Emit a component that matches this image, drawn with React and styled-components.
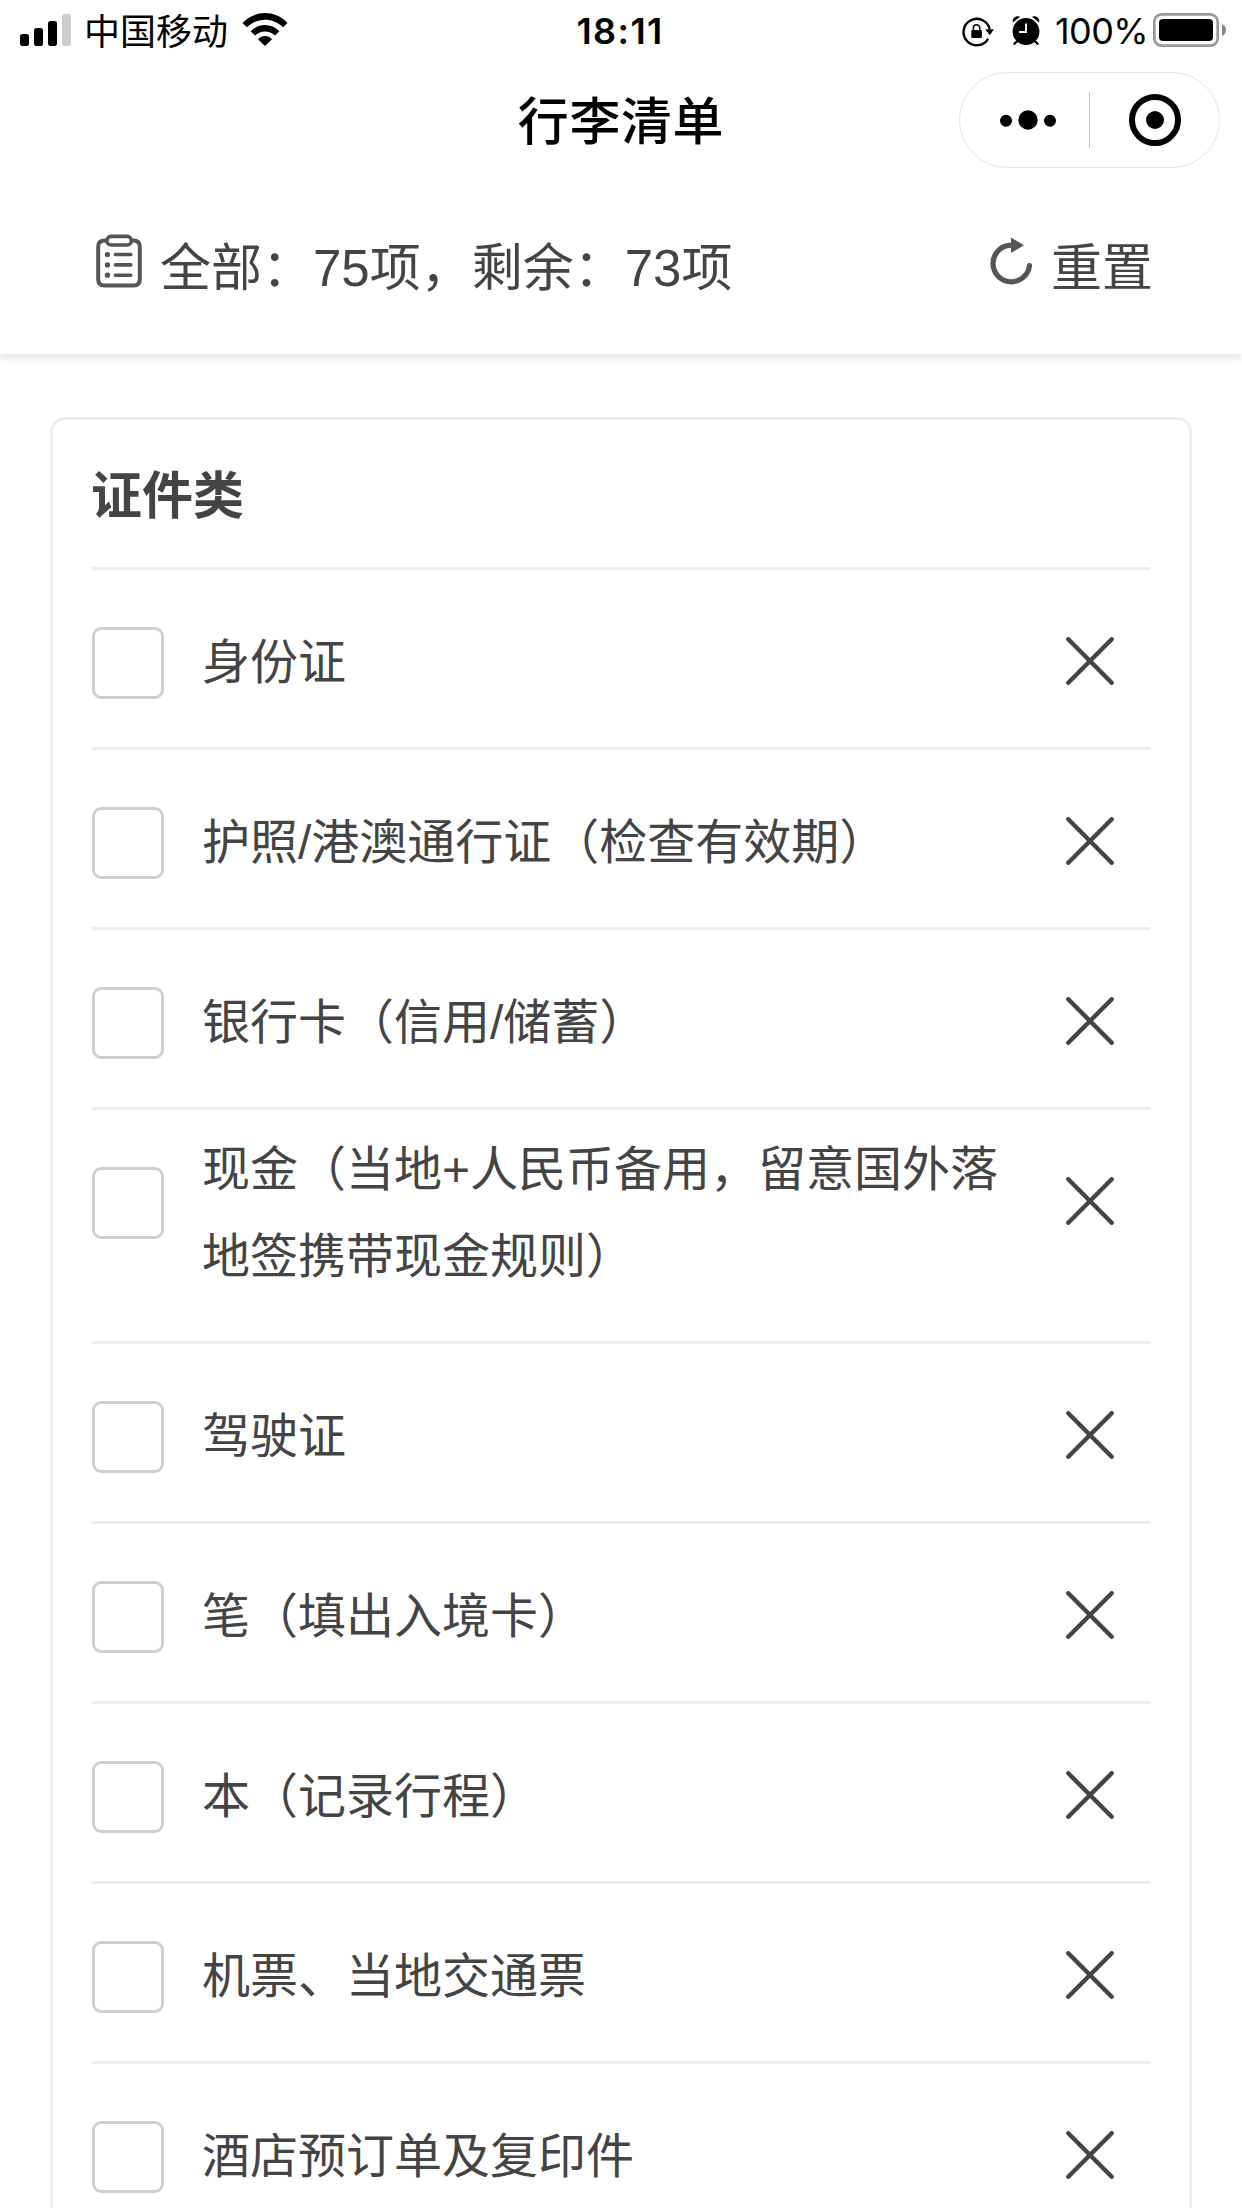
import React from "react";
import styled, { createGlobalStyle } from "styled-components";

const GlobalStyle = createGlobalStyle`
  * { box-sizing: border-box; }
  body {
    margin: 0;
    background: #fff;
    color: #444;
    font-family: "Liberation Sans", "Noto Sans CJK SC", sans-serif;
  }
`;

const Screen = styled.div`
  width: 1242px;
  height: 2208px;
  overflow: hidden;
  background: #fff;
  display: flex;
  flex-direction: column;
`;

const StatusBar = styled.header`
  display: grid;
  grid-template-columns: 1fr 88px 1fr;
  height: 60px;
  flex: none;
  padding: 0 15px 0 20px;
  color: #000;
  font-family: Inter, "Noto Sans CJK SC", sans-serif;
  font-size: 36px;
  line-height: 60px;
`;

const StatusGroup = styled.div`
  display: flex;
  justify-content: ${(p) => (p.$end ? "flex-end" : "flex-start")};
  svg { display: block; flex: none; }
`;

const Carrier = styled.span`
  margin: 2px 14px 0 13px;
  line-height: 60px;
  white-space: nowrap;
`;

const Clock = styled.span`
  padding-top: 1px;
  margin-left: -3px;
  font-size: 36px;
  font-weight: 600;
  letter-spacing: 1.4px;
  white-space: nowrap;
`;

const RotationSlot = styled.span`
  margin-right: 17px;
`;

const Percent = styled.span`
  padding-top: 1px;
  margin: 0 7px 0 15px;
  width: 91px;
  font-size: 36px;
  letter-spacing: -0.6px;
  white-space: nowrap;
`;

const NavBar = styled.nav`
  display: grid;
  grid-template-columns: 1fr auto 1fr;
  align-items: center;
  height: 120px;
  flex: none;
  padding: 0 22px;
  color: #000;
`;

const Title = styled.h1`
  grid-column: 2;
  margin: 0;
  padding-top: 6px;
  font-size: 51px;
  font-weight: 500;
  letter-spacing: 0.6px;
  line-height: 72px;
`;

const Capsule = styled.div`
  justify-self: end;
  display: flex;
  align-items: center;
  width: 261px;
  height: 96px;
  border: 1px solid #e5e5e5;
  border-radius: 48px;
`;

const CapsuleButton = styled.div`
  flex: 1;
  display: flex;
  justify-content: center;
  svg { display: block; }
`;

const CapsuleRule = styled.div`
  width: 1px;
  height: 56px;
  background: #c8c8c8;
`;

const Summary = styled.section`
  display: flex;
  justify-content: space-between;
  height: 174px;
  flex: none;
  padding: 51px 89px 0 95px;
  font-size: 51px;
  line-height: 76px;
  box-shadow: 0 6px 6px #ececec;
`;

const SummaryPart = styled.div`
  display: flex;
  white-space: nowrap;
  svg { display: block; flex: none; margin: -3px ${(p) => p.$gap}px 0 0; }
`;

const Card = styled.main`
  flex: none;
  margin: 63px 50px 0;
  padding: 0 39px;
  border: 3px solid #ededed;
  border-radius: 15px;
`;

const CardTitle = styled.h2`
  margin: 0 0 0 -1px;
  height: 147px;
  padding-top: 39px;
  font-size: 51px;
  font-weight: 700;
  line-height: 76px;
`;

const Row = styled.div`
  display: flex;
  min-height: 180px;
  padding: 16px 36px 41px 0;
  border-top: 3px solid #ededed;
`;

const Checkbox = styled.div`
  flex: none;
  width: 72px;
  height: 72px;
  margin-top: 41px;
  border: 3px solid #cfcfcf;
  border-radius: 9px;
`;

const Label = styled.div`
  align-self: flex-end;
  width: 812px;
  margin-left: 38px;
  font-size: 48px;
  line-height: 87px;
`;

const Remove = styled.div`
  margin: 51px 0 0 auto;
  height: 48px;
  svg { display: block; }
`;

const items = [
  "身份证",
  "护照/港澳通行证（检查有效期）",
  "银行卡（信用/储蓄）",
  "现金（当地+人民币备用，留意国外落地签携带现金规则）",
  "驾驶证",
  "笔（填出入境卡）",
  "本（记录行程）",
  "机票、当地交通票",
  "酒店预订单及复印件",
];

const Signal = () => (
  <svg width="51" height="60">
    <rect x="0" y="34" width="9" height="12" rx="2.8" />
    <rect x="14" y="28" width="9" height="18" rx="2.8" />
    <rect x="28" y="21" width="9" height="25" rx="2.8" />
    <rect x="42" y="14" width="9" height="32" rx="2.8" fill="#ccc" />
  </svg>
);

const Wifi = () => (
  <svg width="46" height="60" viewBox="0 0 46 60">
    <path d="M0.5 23C13 9.8 33 9.8 45.5 23L41 27.3C31 17.3 15 17.3 5 27.3Z" />
    <path d="M8.6 31.2C16.8 22.9 29.2 22.9 37.4 31.2L32.8 35.6C27.4 30.1 18.6 30.1 13.2 35.6Z" />
    <path d="M16 39.2C20 35 26 35 30 39.2L23 46Z" />
  </svg>
);

const RotationLock = () => (
  <svg width="33" height="60" viewBox="0 0 33 60">
    <path
      d="M26.1 38.8A13.2 13.2 0 1 1 27.6 29"
      fill="none"
      stroke="#000"
      strokeWidth="2.4"
    />
    <path d="M23.3 29.2H32L27.8 35.2Z" />
    <rect x="9.3" y="30" width="10.6" height="8" rx="1" />
    <path d="M11.4 31V28a3.2 3.2 0 0 1 6.4 0v3" fill="none" stroke="#000" strokeWidth="1.5" />
  </svg>
);

const Alarm = () => (
  <svg width="28" height="60" viewBox="0 0 28 60">
    <circle cx="14" cy="31.5" r="13.4" />
    <path d="M0.8 22.4C0.2 18 4 15 8.2 16.8ZM27.2 22.4C27.8 18 24 15 19.8 16.8Z" />
    <path d="M5.2 41L2.5 43.8M22.8 41L25.5 43.8" stroke="#000" strokeWidth="2.3" strokeLinecap="round" />
    <path d="M14 23.5V32H7" fill="none" stroke="#fff" strokeWidth="1.9" />
  </svg>
);

const Battery = () => (
  <svg width="74" height="60" viewBox="0 0 74 60">
    <rect x="1.3" y="14.3" width="63.4" height="31.4" rx="7.5" fill="none" stroke="#999" strokeWidth="2.7" />
    <rect x="6" y="19" width="54" height="22" rx="4" />
    <path d="M69 24Q73 26 73 30T69 36Z" fill="#888" />
  </svg>
);

const Refresh = () => (
  <svg width="43" height="70" viewBox="0 0 43 70">
    <path d="M21.2 17.2A18.3 18.3 0 1 0 39.5 37.5" fill="none" stroke="#555" strokeWidth="5.2" strokeLinecap="round" />
    <path d="M21 9.5L34 17.3L21 25Z" fill="#555" />
  </svg>
);

const ListIcon = () => (
  <svg width="48" height="70" viewBox="0 0 48 70" fill="none" stroke="#555" strokeWidth="4" strokeLinecap="round">
    <path d="M11.5 12.6H10Q3.2 12.6 3.2 18.8V51.5Q3.2 57.4 9.2 57.4H38.8Q44.8 57.4 44.8 51.5V18.8Q44.8 12.6 38 12.6H36.5" />
    <rect x="11.8" y="8.4" width="24.6" height="8.6" rx="4.3" strokeWidth="3.6" />
    <path d="M20.4 26.5H35.8M20.4 36.9H35.8M20.4 47.2H35.8" strokeWidth="3.6" />
    <path d="M12.4 26.5h.1M12.4 36.9h.1M12.4 47.2h.1" strokeWidth="5.2" />
  </svg>
);

const Cross = () => (
  <svg width="48" height="48" viewBox="0 0 48 48">
    <path d="M2.3 2.3L45.7 45.7M45.7 2.3L2.3 45.7" stroke="#444" strokeWidth="4.4" strokeLinecap="round" />
  </svg>
);

export default function App() {
  return (
    <Screen>
      <GlobalStyle />
      <StatusBar>
        <StatusGroup>
          <Signal />
          <Carrier>中国移动</Carrier>
          <Wifi />
        </StatusGroup>
        <Clock>18:11</Clock>
        <StatusGroup $end>
          <RotationSlot>
            <RotationLock />
          </RotationSlot>
          <Alarm />
          <Percent>100%</Percent>
          <Battery />
        </StatusGroup>
      </StatusBar>
      <NavBar>
        <Title>行李清单</Title>
        <Capsule>
          <CapsuleButton>
            <svg width="66" height="20" viewBox="-6 0 66 20">
              <circle cx="8" cy="10.7" r="6" />
              <circle cx="30" cy="10" r="9.7" />
              <circle cx="52" cy="10.7" r="6" />
            </svg>
          </CapsuleButton>
          <CapsuleRule />
          <CapsuleButton>
            <svg width="52" height="52">
              <circle cx="26" cy="26" r="23" fill="none" stroke="#000" strokeWidth="6" />
              <circle cx="26" cy="26" r="9" />
            </svg>
          </CapsuleButton>
        </Capsule>
      </NavBar>
      <Summary>
        <SummaryPart $gap={17}>
          <ListIcon />
          全部：75项，剩余：73项
        </SummaryPart>
        <SummaryPart $gap={18}>
          <Refresh />
          重置
        </SummaryPart>
      </Summary>
      <Card>
        <CardTitle>证件类</CardTitle>
        {items.map((text) => (
          <Row key={text}>
            <Checkbox />
            <Label>{text}</Label>
            <Remove>
              <Cross />
            </Remove>
          </Row>
        ))}
      </Card>
    </Screen>
  );
}
